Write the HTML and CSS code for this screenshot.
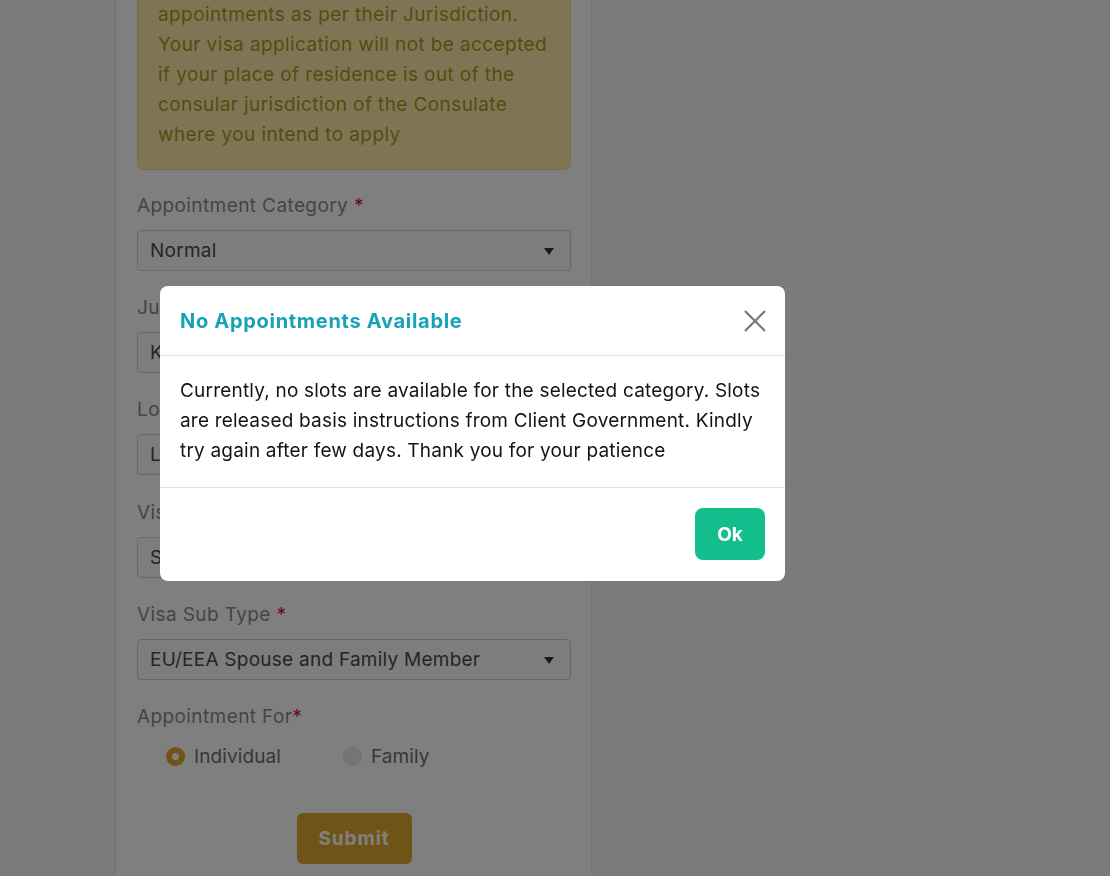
FILE: index.html
```html
<!DOCTYPE html>
<html lang="en">
<head>
<meta charset="utf-8">
<title>Book Appointment</title>
<link rel="stylesheet" href="styles.css">
</head>
<body>
<div class="page">
  <div class="card">
    <div class="notice">Applicants are requested to book their appointments as per their Jurisdiction. Your visa application will not be accepted if your place of residence is out of the consular jurisdiction of the Consulate where you intend to apply</div>

    <div class="field">
      <div class="label">Appointment Category <span class="req">*</span></div>
      <div class="control"><span>Normal</span><span class="caret"></span></div>
    </div>
    <div class="field">
      <div class="label">Jurisdiction <span class="req">*</span></div>
      <div class="control"><span>Karachi</span><span class="caret"></span></div>
    </div>
    <div class="field">
      <div class="label">Location <span class="req">*</span></div>
      <div class="control"><span>Lahore</span><span class="caret"></span></div>
    </div>
    <div class="field">
      <div class="label">Visa Type <span class="req">*</span></div>
      <div class="control"><span>Schengen Visa</span><span class="caret"></span></div>
    </div>
    <div class="field">
      <div class="label">Visa Sub Type <span class="req">*</span></div>
      <div class="control"><span>EU/EEA Spouse and Family Member</span><span class="caret"></span></div>
    </div>
    <div class="field">
      <div class="label">Appointment For<span class="req">*</span></div>
      <div class="radios">
        <div class="radio"><span class="dot dot-on"></span><span>Individual</span></div>
        <div class="radio"><span class="dot"></span><span>Family</span></div>
      </div>
    </div>
    <div class="actions"><button class="submit" type="button">Submit</button></div>
  </div>
</div>

<div class="backdrop"></div>

<div class="modal">
  <div class="modal-header">
    <div class="modal-title">No Appointments Available</div>
    <button class="close" type="button" aria-label="Close">
      <svg width="24" height="24" viewBox="0 0 24 24"><path d="M2 2 L22 22 M22 2 L2 22" stroke="#777" stroke-width="2.2" fill="none"/></svg>
    </button>
  </div>
  <div class="modal-body">Currently, no slots are available for the selected category. Slots are released basis instructions from Client Government. Kindly try again after few days. Thank you for your patience</div>
  <div class="modal-footer"><button class="ok" type="button">Ok</button></div>
</div>
</body>
</html>
```

FILE: styles.css
```css
* { box-sizing: border-box; }

html, body {
  margin: 0;
  height: 100%;
}

body {
  background: #f7f7f7;
  font-family: Inter, "Open Sans", sans-serif;
  overflow: hidden;
}

.page {
  padding-left: 116px;
}

.card {
  width: 475px;
  background: #ffffff;
  margin-top: -72px;
  padding: 20px 20px 40px 21px;
  box-shadow: 0 0 3px rgba(0, 0, 0, 0.12);
}

.notice {
  background: #fcebab;
  border: 1px solid #efdb98;
  border-radius: 6px;
  padding: 21px 17px 19px 20px;
  color: #b9931f;
  font-size: 19px;
  letter-spacing: 0.4px;
  line-height: 30px;
}

.field {
  margin-top: 24px;
}

.field + .field {
  margin-top: 25.2px;
}

.label {
  font-size: 19px;
  letter-spacing: 0.4px;
  line-height: 24px;
  color: #8a8a8a;
  margin-bottom: 12px;
}

.req {
  color: #d0103a;
}

.control {
  height: 41px;
  border: 1px solid #d0d0d0;
  border-radius: 4px;
  background: #fafafa;
  display: flex;
  align-items: center;
  justify-content: space-between;
  padding: 0 16px 0 12px;
  font-size: 19px;
  letter-spacing: 0.25px;
  color: #4a4a4a;
}

.caret {
  width: 0;
  height: 0;
  border-left: 5px solid transparent;
  border-right: 5px solid transparent;
  border-top: 7px solid #333;
  margin-top: 2px;
}

.radios {
  display: flex;
  align-items: center;
  padding-left: 29px;
  margin-top: 16px;
  font-size: 19px;
  letter-spacing: 0.1px;
  line-height: 24px;
  color: #6e6e6e;
}

.radio {
  display: flex;
  align-items: center;
  gap: 9px;
  margin-right: 62px;
}

.dot {
  width: 19px;
  height: 19px;
  border-radius: 50%;
  background: #eaeaea;
  border: 1px solid #e0e0e0;
}

.dot-on {
  background: #ffffff;
  border: 6px solid #e0a82e;
}

.actions {
  display: flex;
  justify-content: center;
  margin-top: 44px;
}

.submit {
  width: 115px;
  height: 51px;
  border: none;
  border-radius: 6px;
  background: #e0a82e;
  color: #ffffff;
  font-family: Inter, sans-serif;
  font-weight: 700;
  font-size: 19px;
  letter-spacing: 0.9px;
}

.backdrop {
  position: fixed;
  inset: 0;
  background: rgba(0, 0, 0, 0.5);
}

.modal {
  position: fixed;
  top: 286px;
  left: 160px;
  width: 625px;
  background: #ffffff;
  border-radius: 8px;
  overflow: hidden;
}

.modal-header {
  display: flex;
  align-items: center;
  justify-content: space-between;
  height: 70px;
  padding: 0 18px 0 20px;
  border-bottom: 1px solid #dee2e6;
}

.modal-title {
  font-family: Inter, sans-serif;
  font-weight: 700;
  font-size: 20px;
  letter-spacing: 0.7px;
  line-height: 30px;
  color: #17a2b8;
}

.close {
  border: none;
  background: none;
  padding: 0;
  width: 24px;
  height: 24px;
  display: flex;
}

.modal-body {
  padding: 20px;
  height: 131px;
  font-size: 19px;
  letter-spacing: 0.2px;
  line-height: 30px;
  color: #141414;
}

.modal-footer {
  display: flex;
  justify-content: flex-end;
  padding: 20px 20px 21px;
  border-top: 1px solid #dee2e6;
}

.ok {
  width: 70px;
  height: 52px;
  border: none;
  border-radius: 8px;
  background: #12bf8c;
  color: #ffffff;
  font-family: Inter, sans-serif;
  font-weight: 700;
  font-size: 19px;
}
```
